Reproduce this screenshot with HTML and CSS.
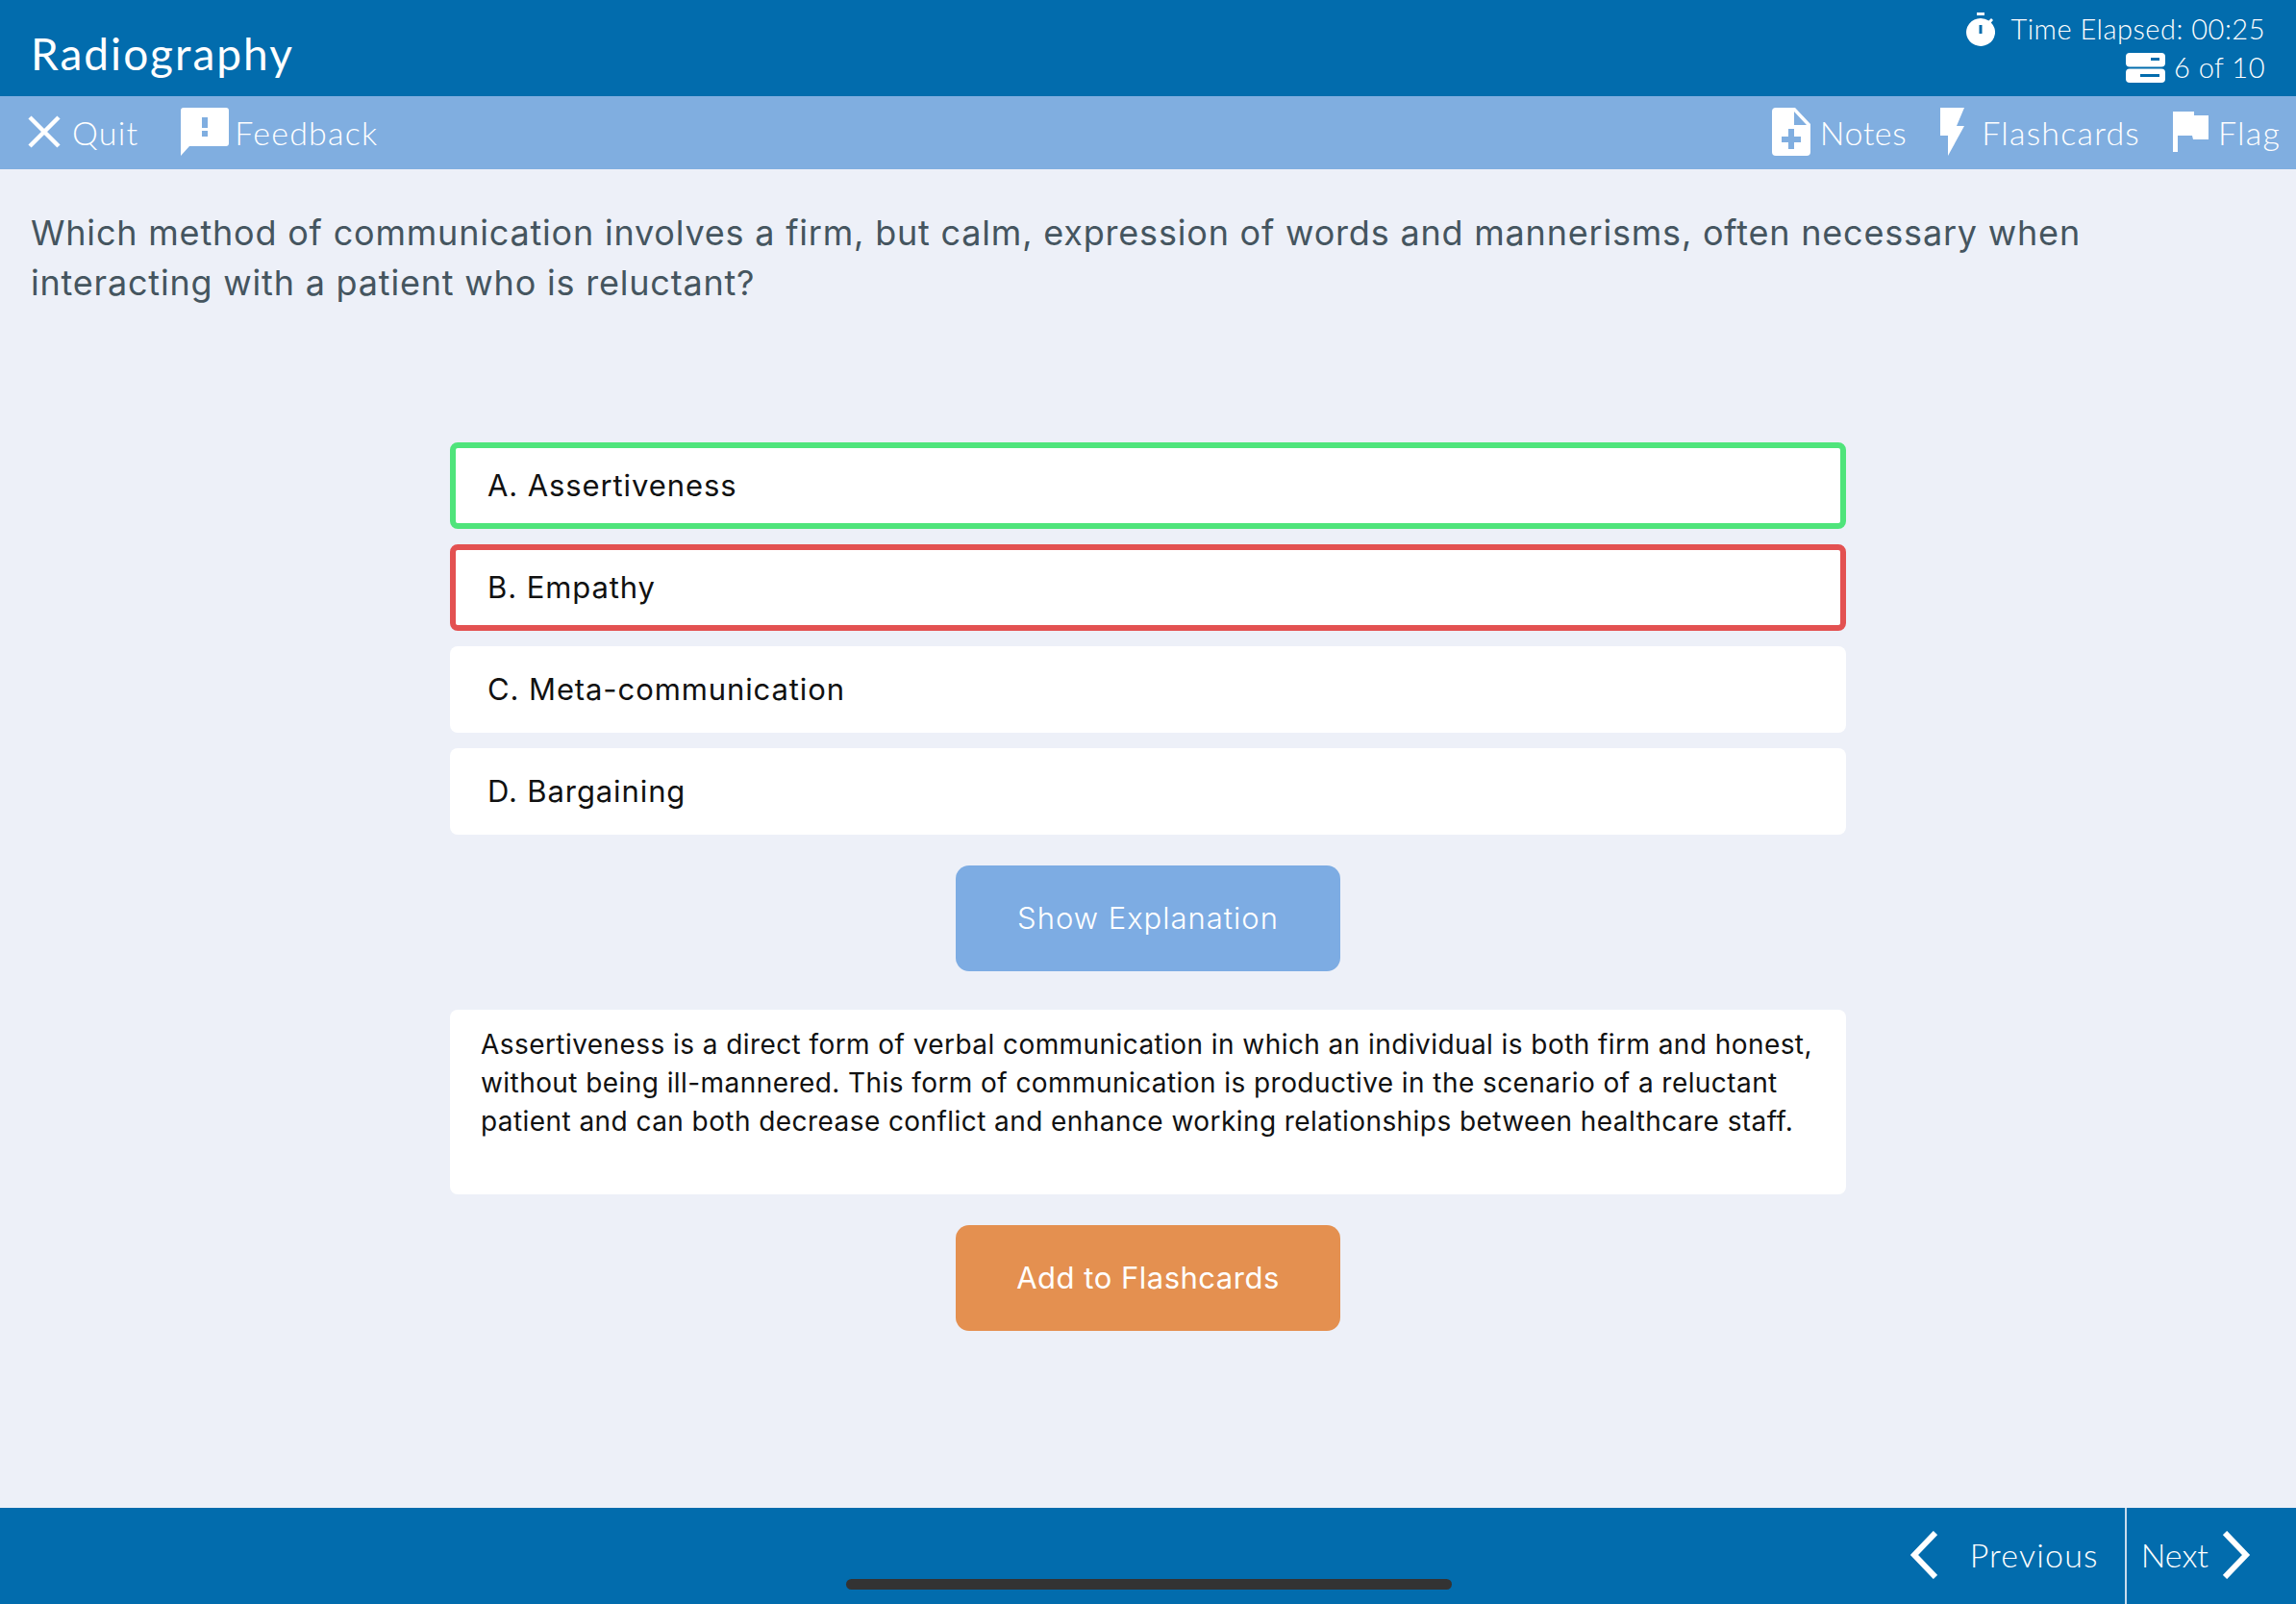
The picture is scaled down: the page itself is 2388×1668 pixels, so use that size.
FILE: index.html
```html
<!DOCTYPE html>
<html lang="en">
<head>
    <meta charset="UTF-8">
    <meta name="viewport" content="width=device-width, initial-scale=1.0">
    <title>Radiography</title>
    <link rel="stylesheet" href="styles.css">
</head>
<body>

<header class="topbar">
    <h1 class="title">Radiography</h1>
    <div class="status">
        <div class="status-row">
            <svg class="icon-timer" viewBox="0 0 30 35"><path fill="#fff" d="M11 0h8v3h-8zM15 6a15 14.500 0 0 1 8.500 2.600L26 6l2 2-2.200 2.400A15 14.500 0 1 1 15 6z"/><rect x="13.500" y="13" width="3" height="9" fill="#026cad"/></svg>
            <span>Time Elapsed: 00:25</span>
        </div>
        <div class="status-row">
            <svg class="icon-cards" viewBox="0 0 41 31"><rect width="41" height="14.500" rx="4" fill="#fff"/><rect y="16.500" width="41" height="14.500" rx="4" fill="#fff"/><rect x="26" y="5" width="9" height="3" fill="#026cad"/><rect x="15" y="22" width="20" height="3" fill="#026cad"/></svg>
            <span>6 of 10</span>
        </div>
    </div>
</header>

<nav class="toolbar">
    <div class="tool-group">
        <a href="#" class="tool tool-quit">
            <svg class="icon-x" viewBox="0 0 34 34"><path d="M2 2l30 30M32 2L2 32" stroke="#fff" stroke-width="4.500" fill="none"/></svg>
            Quit
        </a>
        <a href="#" class="tool tool-feedback">
            <svg class="icon-feedback" viewBox="0 0 50 50"><path fill="#fff" d="M3 0h44a3 3 0 0 1 3 3v34a3 3 0 0 1-3 3H9L0 50V3a3 3 0 0 1 3-3z"/><rect x="22" y="10" width="6" height="11" fill="#80aee0"/><rect x="22" y="24" width="6" height="6" fill="#80aee0"/></svg>
            Feedback
        </a>
    </div>
    <div class="tool-group">
        <a href="#" class="tool tool-notes">
            <svg class="icon-notes" viewBox="0 0 40 50"><path fill="#fff" d="M4 0h20l16 17v29a4 4 0 0 1-4 4H4a4 4 0 0 1-4-4V4a4 4 0 0 1 4-4z"/><path fill="#80aee0" d="M23 4l13 14H23zM17 22h6v8h7v6h-7v7h-6v-7h-7v-6h7z"/></svg>
            Notes
        </a>
        <a href="#" class="tool tool-cards">
            <svg class="icon-bolt" viewBox="0 0 25 50"><path fill="#fff" d="M0 0h25l-8 19h8L8 50V29H0z"/></svg>
            Flashcards
        </a>
        <a href="#" class="tool tool-flag">
            <svg class="icon-flag" viewBox="0 0 37 42"><path fill="#fff" d="M0 0h22v4h15v25H21l-1-4H5v17H0z"/></svg>
            Flag
        </a>
    </div>
</nav>

<main class="content">
    <p class="question">Which method of communication involves a firm, but calm, expression of words and mannerisms, often necessary when interacting with a patient who is reluctant?</p>

    <div class="quiz">
        <div class="option correct">A. Assertiveness</div>
        <div class="option wrong">B. Empathy</div>
        <div class="option">C. Meta-communication</div>
        <div class="option">D. Bargaining</div>

        <a href="#" class="btn btn-blue">Show Explanation</a>

        <div class="explanation">Assertiveness is a direct form of verbal communication in which an individual is both firm and honest, without being ill-mannered. This form of communication is productive in the scenario of a reluctant patient and can both decrease conflict and enhance working relationships between healthcare staff.</div>

        <a href="#" class="btn btn-orange">Add to Flashcards</a>
    </div>
</main>

<footer class="bottombar">
    <a href="#" class="nav-btn nav-prev">
        <svg class="icon-chevron" viewBox="0 0 29 50"><path d="M27 2L5 25l22 23" stroke="#fff" stroke-width="6" fill="none"/></svg>
        Previous
    </a>
    <a href="#" class="nav-btn nav-next">
        Next
        <svg class="icon-chevron" viewBox="0 0 29 50"><path d="M2 2l22 23L2 48" stroke="#fff" stroke-width="6" fill="none"/></svg>
    </a>
    <div class="home-bar"></div>
</footer>

</body>
</html>
```

FILE: styles.css
```css
* {
    box-sizing: border-box;
}
html {
    height: 1668px;
    overflow: hidden;
}
body {
    margin: 0;
    height: 1668px;
    display: flex;
    flex-direction: column;
    overflow: hidden;
    background-color: #edf0f8;
    font-family: Inter, "Liberation Sans", sans-serif;
}
a {
    color: inherit;
    text-decoration: none;
}

/* top bars */
.topbar {
    height: 100px;
    display: flex;
    justify-content: space-between;
    background-color: #026cad;
    color: white;
    padding: 0 32px;
    font-family: Lato, sans-serif;
}
.title {
    margin: 0;
    padding-top: 29px;
    font-size: 46px;
    line-height: 54px;
    font-weight: 400;
    letter-spacing: 2px;
}
.status {
    padding-top: 10px;
    font-size: 29px;
    line-height: 40px;
    letter-spacing: 0.5px;
    font-weight: 300;
}
.status-row {
    display: flex;
    justify-content: flex-end;
    align-items: center;
}
.icon-timer {
    width: 30px;
    height: 35px;
    margin-right: 16px;
}
.icon-cards {
    width: 41px;
    height: 31px;
    margin-right: 9px;
}
.toolbar {
    height: 76px;
    display: flex;
    justify-content: space-between;
    background-color: #80aee0;
    color: white;
    padding: 0 16px 0 29px;
    font-family: Lato, sans-serif;
    font-size: 34px;
    font-weight: 300;
    letter-spacing: 1.2px;
}
.tool-group {
    display: flex;
    align-items: center;
}
.tool {
    display: flex;
    align-items: center;
    padding-bottom: 2px;
}
.icon-x {
    width: 34px;
    height: 34px;
    margin-right: 12px;
}
.tool-feedback {
    margin-left: 44px;
}
.icon-feedback {
    width: 50px;
    height: 50px;
    margin-right: 6px;
}
.tool-notes {
    letter-spacing: 0.6px;
}
.icon-notes {
    width: 40px;
    height: 50px;
    margin-right: 10px;
}
.tool-cards {
    margin-left: 35px;
}
.icon-bolt {
    width: 25px;
    height: 50px;
    margin-right: 18px;
}
.tool-flag {
    margin-left: 34px;
}
.icon-flag {
    width: 37px;
    height: 42px;
    margin-right: 10px;
}

/* question and answers */
.content {
    flex: 1;
    padding: 40px 32px 0;
}
.question {
    margin: 0;
    width: 2200px;
    font-size: 36px;
    line-height: 52px;
    letter-spacing: 0.8px;
    color: #45555f;
}
.quiz {
    width: 1452px;
    margin: 140px auto 0;
    display: flex;
    flex-direction: column;
    align-items: center;
}
.option {
    width: 100%;
    height: 90px;
    margin-bottom: 16px;
    padding: 0 0 2px 39px;
    display: flex;
    align-items: center;
    background-color: white;
    border-radius: 8px;
    font-size: 31px;
    letter-spacing: 0.9px;
    color: #111;
}
.option.correct {
    border: 6px solid #4fe47b;
    padding-left: 33px;
}
.option.wrong {
    border: 6px solid #e35151;
    padding-left: 33px;
}
.btn {
    width: 400px;
    height: 110px;
    display: flex;
    align-items: center;
    justify-content: center;
    border-radius: 14px;
    color: white;
    font-size: 31px;
    letter-spacing: 1px;
    font-weight: 300;
    padding-bottom: 2px;
}
.btn-blue {
    margin-top: 16px;
    background-color: #7dace3;
}
.btn-orange {
    background-color: #e49050;
    font-weight: 400;
    letter-spacing: 0.5px;
}
.explanation {
    width: 100%;
    height: 192px;
    margin: 40px 0 32px;
    padding: 16px 32px;
    background-color: white;
    border-radius: 8px;
    font-size: 28px;
    line-height: 40px;
    letter-spacing: 0.43px;
    color: #111;
}

/* bottom bar */
.bottombar {
    position: relative;
    height: 100px;
    display: flex;
    justify-content: flex-end;
    background-color: #026cad;
    color: white;
    font-family: Lato, sans-serif;
    font-size: 34px;
    font-weight: 300;
    letter-spacing: 1.2px;
}
.nav-btn {
    display: flex;
    align-items: center;
    padding-bottom: 3px;
}
.nav-prev {
    padding-right: 27px;
    border-right: 2px solid #c9dcec;
}
.nav-prev .icon-chevron {
    margin-right: 34px;
}
.nav-next {
    padding: 0 47px 3px 15px;
    letter-spacing: 0;
}
.nav-next .icon-chevron {
    margin-left: 15px;
}
.icon-chevron {
    width: 29px;
    height: 50px;
}
.home-bar {
    position: absolute;
    left: 880px;
    bottom: 15px;
    width: 630px;
    height: 11px;
    border-radius: 6px;
    background-color: #333;
}
```
